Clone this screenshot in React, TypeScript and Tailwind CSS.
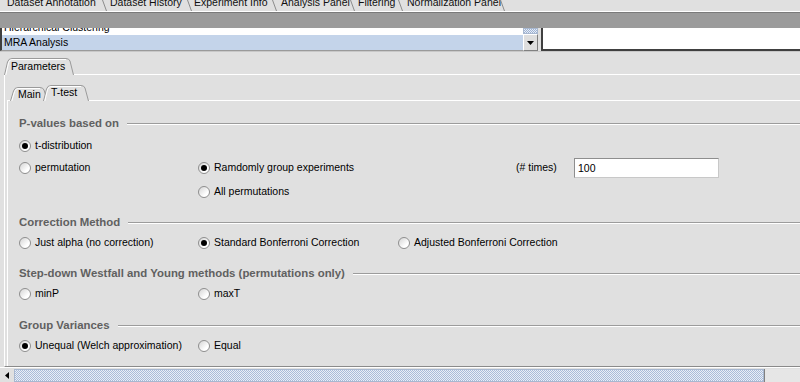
import React from "react";

type TopTab = { label: string; cls: string };

const topTabs: TopTab[] = [
  { label: "Dataset Annotation", cls: "w-[107px] pl-[7px]" },
  { label: "Dataset History", cls: "w-[85px] pl-[3px]" },
  { label: "Experiment Info", cls: "w-[85px] pl-[2px]" },
  { label: "Analysis Panel", cls: "w-[78px] pl-[4px]" },
  { label: "Filtering", cls: "w-[48px] pl-[3px]" },
  { label: "Normalization Panel", cls: "w-[102px] pl-[4px]" },
];

function Radio({ checked, label }: { checked?: boolean; label: string }) {
  return (
    <div className="flex items-center gap-[4px] whitespace-nowrap">
      <span className="flex w-[12px] h-[12px] items-center justify-center rounded-full border border-[#8e8e8e] bg-[linear-gradient(135deg,#d4d4d4,#ffffff_70%)]">
        {checked && <span className="w-[6px] h-[6px] rounded-full bg-black" />}
      </span>
      <span>{label}</span>
    </div>
  );
}

function Heading({ title }: { title: string }) {
  return (
    <div className="flex items-center h-[20px]">
      <span className="font-bold text-[11.4px] text-[#606060] whitespace-nowrap">{title}</span>
      <div className="flex-1 ml-[8px] border-t border-t-[#9c9c9c] border-b border-b-white" />
    </div>
  );
}

/* contour d'onglet façon Swing */
function TabShape({ w, h }: { w: number; h: number }) {
  return (
    <svg className="absolute inset-0" width={w} height={h} viewBox={`0 0 ${w} ${h}`}>
      <path
        d={`M0.5 ${h} L3.5 4 Q4.5 0.5 8 0.5 L${w - 8} 0.5 Q${w - 5} 0.5 ${w - 4} 3 L${w - 0.5} ${h}`}
        fill="#e0e0e0"
        stroke="#9a9a9a"
      />
      <path
        d={`M1.8 ${h} L4.6 4.5 Q5.5 1.5 8 1.5 L${w - 8} 1.5`}
        fill="none"
        stroke="#ffffff"
      />
    </svg>
  );
}

export default function App() {
  return (
    <div className="w-[800px] h-[382px] overflow-hidden bg-[#e0e0e0] text-[10.5px] text-black font-['Liberation_Sans',Arial,sans-serif] flex flex-col">
      {/* Onglets du haut (coupés) */}
      <div className="h-[11px] overflow-hidden flex shrink-0">
        {topTabs.map((t) => (
          <div key={t.label} className={`relative shrink-0 h-full ${t.cls}`}>
            <span className="block -mt-[4px] leading-[13px] whitespace-nowrap text-[#111]">
              {t.label}
            </span>
            <svg className="absolute right-0 top-0" width="5" height="11">
              <line x1="0.5" y1="0" x2="4.5" y2="11" stroke="#8c8c8c" />
            </svg>
          </div>
        ))}
      </div>
      <div className="h-px bg-white shrink-0" />
      <div className="h-px bg-[#7a7a7a] shrink-0" />
      <div className="h-[15px] bg-[#9b9b9b] shrink-0" />

      {/* Liste + champ */}
      <div className="h-[23px] flex shrink-0">
        <div className="w-[523px] bg-white border-l-2 border-l-[#404040] border-b border-b-[#9a9a9a] flex flex-col overflow-hidden">
          <div className="h-[7px] overflow-hidden">
            <span className="block -mt-[8px] leading-[15px] pl-[2px] whitespace-nowrap">
              Hierarchical Clustering
            </span>
          </div>
          <div className="h-[15px] bg-[#c4d4ea] pl-[2px] leading-[15px]">MRA Analysis</div>
        </div>
        <div className="w-[15px] flex flex-col">
          <div className="h-[6px] border border-[#a8b8d0] bg-[repeating-conic-gradient(#9fb3d3_0_25%,#e6edf7_0_50%)] bg-[length:2px_2px]" />
          <div className="h-[17px] border border-t-white border-l-white border-r-[#808080] border-b-[#808080] bg-[#dedede] flex items-center justify-center">
            <svg width="7" height="4">
              <path d="M0 0 L7 0 L3.5 4 Z" fill="#000" />
            </svg>
          </div>
        </div>
        <div className="w-[3px]" />
        <div className="flex-1 bg-white border-l-2 border-l-[#404040] border-b-2 border-b-[#404040]" />
      </div>
      <div className="h-px bg-[#c8c8c8] shrink-0" />

      {/* Panneau Parameters */}
      <div className="flex-1 flex flex-col min-h-0">
        <div className="h-[22px] flex items-end pl-[4px] shrink-0">
          <div className="relative w-[70px] h-[17px] -mb-px">
            <TabShape w={70} h={17} />
            <span className="relative block pl-[7px] pt-[1px] leading-[14px]">Parameters</span>
          </div>
        </div>
        <div className="flex-1 ml-[4px] border-t border-l border-white flex flex-col min-h-0 border-b border-b-[#8a8a8a]">
          <div className="h-[25px] flex items-end pl-[5px] shrink-0">
            <div className="relative w-[38px] h-[14px] -mb-px">
              <TabShape w={38} h={14} />
              <span className="relative block pl-[8px] pt-[1px] leading-[13px]">Main</span>
            </div>
            <div className="relative w-[46px] h-[16px] -ml-[5px] -mb-px">
              <TabShape w={46} h={16} />
              <span className="relative block pl-[8px] pt-[1px] leading-[13px]">T-test</span>
            </div>
          </div>
          <div className="flex-1 ml-[2px] border-t border-l border-white pl-[11px] pt-[13px] flex flex-col min-h-0">
            <Heading title="P-values based on" />
            <div className="h-[20px] mt-[2px] flex items-center">
              <Radio checked label="t-distribution" />
            </div>
            <div className="h-[20px] mt-[2px] flex items-center">
              <div className="w-[179px]">
                <Radio label="permutation" />
              </div>
              <div className="w-[318px]">
                <Radio checked label="Ramdomly group experiments" />
              </div>
              <div className="w-[58px] whitespace-nowrap">(# times)</div>
              <div className="w-[145px] h-[20px] bg-white border border-[#8e8e8e] border-r-[#c8c8c8] border-b-[#c8c8c8] pl-[3px] leading-[18px]">
                100
              </div>
            </div>
            <div className="h-[20px] mt-[4px] flex items-center pl-[179px]">
              <Radio label="All permutations" />
            </div>

            <div className="mt-[11px]">
              <Heading title="Correction Method" />
            </div>
            <div className="h-[20px] flex items-center">
              <div className="w-[179px]">
                <Radio label="Just alpha (no correction)" />
              </div>
              <div className="w-[200px]">
                <Radio checked label="Standard Bonferroni Correction" />
              </div>
              <Radio label="Adjusted Bonferroni Correction" />
            </div>

            <div className="mt-[11px]">
              <Heading title="Step-down Westfall and Young methods (permutations only)" />
            </div>
            <div className="h-[20px] flex items-center">
              <div className="w-[179px]">
                <Radio label="minP" />
              </div>
              <Radio label="maxT" />
            </div>

            <div className="mt-[12px]">
              <Heading title="Group Variances" />
            </div>
            <div className="h-[20px] flex items-center">
              <div className="w-[179px]">
                <Radio checked label="Unequal (Welch approximation)" />
              </div>
              <Radio label="Equal" />
            </div>
          </div>
        </div>
      </div>

      {/* Barre de défilement horizontale */}
      <div className="h-px bg-white shrink-0" />
      <div className="h-[14px] flex shrink-0 pt-[1px]">
        <div className="w-[14px] flex items-center justify-center bg-[#e0e0e0]">
          <svg width="4" height="7">
            <path d="M4 0 L4 7 L0 3.5 Z" fill="#000" />
          </svg>
        </div>
        <div className="w-[750px] border border-[#a8b8d0] bg-[repeating-conic-gradient(#a9bcd9_0_25%,#e9eef7_0_50%)] bg-[length:2px_2px]" />
        <div className="flex-1 border-l border-[#808080] bg-[#e6e6e6]" />
      </div>
    </div>
  );
}
